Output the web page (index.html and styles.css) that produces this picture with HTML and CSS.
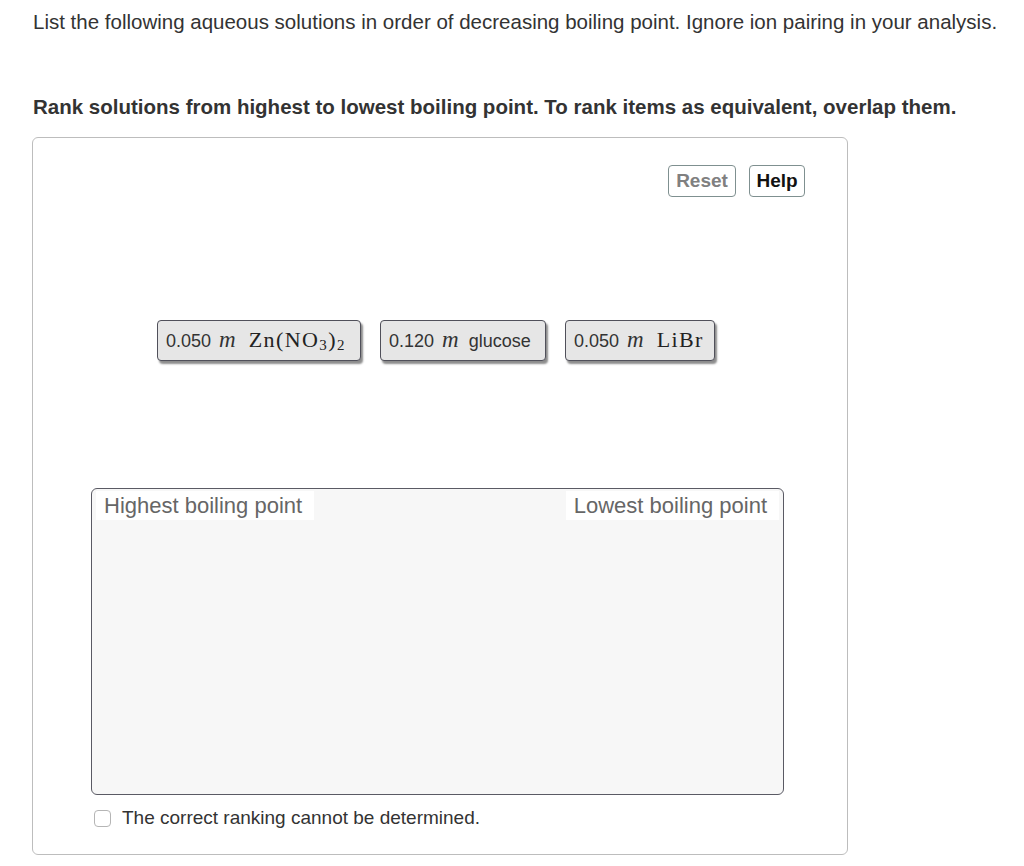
FILE: index.html
```html
<!DOCTYPE html>
<html>
<head>
<meta charset="utf-8">
<link rel="stylesheet" href="styles.css">
</head>
<body>
<p class="intro">List the following aqueous solutions in order of decreasing boiling point. Ignore ion pairing in your analysis.</p>
<p class="instr">Rank solutions from highest to lowest boiling point. To rank items as equivalent, overlap them.</p>
<div class="panel">
  <div class="tools">
    <button class="btn reset">Reset</button>
    <button class="btn help">Help</button>
  </div>
  <div class="items">
    <div class="item i1">0.050 <span class="mi">m</span> <span class="mr">Zn(NO<sub>3</sub>)<sub>2</sub></span></div>
    <div class="item i2">0.120 <span class="mi">m</span> glucose</div>
    <div class="item i3">0.050 <span class="mi">m</span> <span class="mr">LiBr</span></div>
  </div>
  <div class="rank">
    <div class="labels">
      <span class="lbl">Highest boiling point</span>
      <span class="lbl">Lowest boiling point</span>
    </div>
  </div>
  <label class="check"><span class="box"></span>The correct ranking cannot be determined.</label>
</div>
</body>
</html>
```
FILE: styles.css
```css
body {
  margin: 0;
  font-family: "Liberation Sans", Arial, sans-serif;
  color: #333;
  background: #fff;
}
.intro {
  margin: 10px 0 0 33px;
  font-size: 20.5px;
  line-height: 24px;
}
.instr {
  margin: 61px 0 0 33px;
  font-size: 20.5px;
  line-height: 24px;
  font-weight: bold;
}
.panel {
  margin: 18px 0 0 32px;
  width: 814px;
  height: 716px;
  border: 1px solid #bdbdbd;
  border-radius: 6px;
  box-sizing: content-box;
  display: flex;
  flex-direction: column;
}
.tools {
  display: flex;
  justify-content: flex-end;
  gap: 13px;
  margin: 27px 42px 0 0;
}
.btn {
  font-family: "Liberation Sans", Arial, sans-serif;
  font-weight: bold;
  font-size: 19px;
  height: 32px;
  padding: 0;
  background: #fff;
  border: 1px solid #7f9090;
  border-radius: 4px;
  color: #111;
}
.btn.reset { color: #808080; width: 68px; }
.btn.help { width: 56px; }
.items {
  display: flex;
  justify-content: flex-start;
  gap: 19px;
  margin: 123px 0 0 124px;
}
.item {
  height: 41px;
  box-sizing: border-box;
  background: #e6e6e6;
  border: 1.5px solid #50505a;
  border-radius: 4px;
  box-shadow: 2px 3px 2px rgba(0,0,0,0.45);
  font-size: 18px;
  line-height: 38px;
  padding: 0 8px;
  color: #333;
  white-space: nowrap;
}
.i1 { width: 204px; }
.i2 { width: 166px; }
.i3 { width: 150px; }
.mi {
  font-family: "Liberation Serif", "Times New Roman", serif;
  font-style: italic;
  font-size: 23px;
  margin: 0 5px 0 3px;
}
.mr {
  font-family: "Liberation Serif", "Times New Roman", serif;
  font-size: 22px;
  letter-spacing: 1.4px;
  color: #222;
  margin-left: 3px;
}
.mr sub { font-size: 15px; vertical-align: -3px; line-height: 0; }
.rank {
  margin: 127px 0 0 58px;
  width: 693px;
  height: 307px;
  box-sizing: border-box;
  background: #f7f7f7;
  border: 1.5px solid #5a5a64;
  border-radius: 6px;
  padding: 2px 4px;
}
.labels {
  display: flex;
  justify-content: space-between;
}
.lbl {
  background: #fff;
  color: #666;
  font-size: 22px;
  line-height: 29px;
  padding: 0 12px 0 8px;
}
.check {
  display: flex;
  align-items: center;
  margin: 12px 0 0 61px;
  font-size: 19px;
  line-height: 22px;
  color: #333;
}
.box {
  width: 15px;
  height: 15px;
  border: 1px solid #b5b5b5;
  border-radius: 4px;
  margin-right: 11px;
  background: #fff;
}
```
